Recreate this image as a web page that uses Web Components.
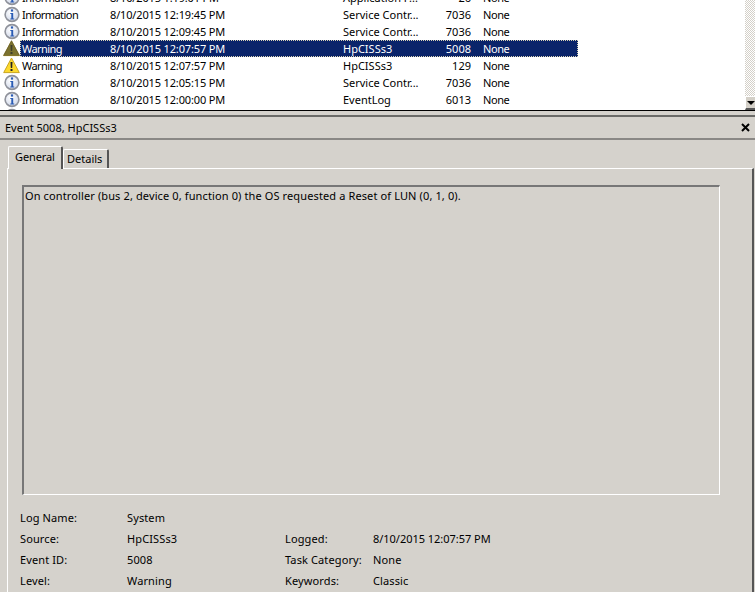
<!DOCTYPE html>
<html>
<head>
<meta charset="utf-8">
<title>Event 5008</title>
<style>
html, body { margin: 0; height: 100%; overflow: hidden; background: #d5d2cc; }
body { font: 11px/14px "Noto Sans", sans-serif; color: #000; }
</style>
</head>
<body>
<template id="info-icon">
  <svg width="17" height="17" viewBox="0 0 17 17">
    <defs><radialGradient id="b" cx="0.4" cy="0.35" r="0.8"><stop offset="0" stop-color="#fff"/><stop offset="1" stop-color="#c6cfe4"/></radialGradient></defs>
    <circle cx="9" cy="8.500" r="6.900" fill="url(#b)" stroke="#8f929b" stroke-width="1.600"/>
    <rect x="7.900" y="3.400" width="2.200" height="2.200" fill="#2a5bb4"/>
    <path d="M7.300 7h2.900v5.400h1v1H7.300v-1h1V8H7.300z" fill="#2a5bb4"/>
  </svg>
</template>
<template id="warn-icon">
  <svg width="17" height="17" viewBox="0 0 17 17">
    <path d="M8.500 1 16.300 15.600H.7z" fill="#fcd92e" stroke="#c9a520" stroke-width="1" stroke-linejoin="round"/>
    <path d="M7.500 5h2l-.3 6H7.800z" fill="#222"/>
    <rect x="7.500" y="12" width="2" height="2" fill="#222"/>
  </svg>
</template>
<script>
  class EventRow extends HTMLElement {
    constructor() {
      super();
      this.attachShadow({ mode: 'open' });
    }

    // attributes are not there yet in the constructor while the parser runs
    connectedCallback() {
      const selected = this.hasAttribute('selected');
      const type = this.getAttribute('level') === 'Warning' ? 'warn-icon' : 'info-icon';
      this.shadowRoot.innerHTML = `
<style>
:host { display: block; height: 17px; }
.row { display: flex; height: 17px; }
.icon { width: 17px; height: 17px; margin-left: 3px; flex: none; position: relative; }
.icon svg { display: block; }
.shade { position: absolute; inset: 0; background: #4a4a30; opacity: .72; clip-path: polygon(50% 0, 100% 92%, 0 92%); }
.cells { display: flex; width: 558px; height: 17px; align-items: center; box-sizing: border-box; white-space: nowrap; padding-top: 1px; }
.selected { background: #0a246a; color: #fff; outline: 1px dotted #d8d2b4; outline-offset: -1px; }
.level { width: 90px; padding-left: 2px; box-sizing: border-box; letter-spacing: -.55px; }
.date { width: 233px; letter-spacing: -.15px; }
.source { width: 84px; }
.id { width: 44px; text-align: right; }
.task { padding-left: 12px; letter-spacing: -.4px; }
</style>
<div class="row">
  <div class="icon"></div>
  <div class="cells ${selected ? 'selected' : ''}">
    <span class="level">${this.getAttribute('level') || ''}</span>
    <span class="date">${this.getAttribute('date') || ''}</span>
    <span class="source">${this.getAttribute('source') || ''}</span>
    <span class="id">${this.getAttribute('event') || ''}</span>
    <span class="task">${this.getAttribute('task') || ''}</span>
  </div>
</div>`;
      const $icon = this.shadowRoot.querySelector('.icon');
      $icon.appendChild(document.getElementById(type).content.cloneNode(true));
      if (selected) {
        $icon.insertAdjacentHTML('beforeend', '<div class="shade"></div>');
      }
    }
  }
  customElements.define('event-row', EventRow);

  class EventList extends HTMLElement {
    constructor() {
      super();
      const shadowRoot = this.attachShadow({ mode: 'open' });
      shadowRoot.innerHTML = `
<style>
:host { display: flex; height: 110px; background: #fff; border-bottom: 1px solid #000; overflow: hidden; }
.rows { flex: 1; margin-top: -11px; min-width: 0; }
.bar { width: 10px; display: flex; flex-direction: column; justify-content: flex-end;
  background: repeating-conic-gradient(#d4d0c8 0 25%, #fff 0 50%) 0 0 / 2px 2px; }
.btn { height: 14px; background: #d4d0c8; border-top: 1px solid #fff; border-left: 1px solid #fff; border-bottom: 2px solid #555; box-sizing: border-box; position: relative; }
.btn::after { content: ''; position: absolute; left: 1px; top: 4px; border: 4px solid transparent; border-top-color: #000; border-bottom: 0; }
</style>
<div class="rows"><slot></slot></div>
<div class="bar"><div class="btn"></div></div>`;
    }
  }
  customElements.define('event-list', EventList);

  class PaneHeader extends HTMLElement {
    constructor() {
      super();
      const shadowRoot = this.attachShadow({ mode: 'open' });
      shadowRoot.innerHTML = `
<style>
:host { display: flex; align-items: center; justify-content: space-between; height: 21px; margin-top: 4px;
  border-top: 2px solid #6b6b68; border-bottom: 2px solid #8a8885; padding: 0 5px; }
svg { display: block; }
</style>
<span><slot></slot></span>
<svg width="9" height="9" viewBox="0 0 9 9"><path d="M1 1l7 7M8 1 1 8" stroke="#000" stroke-width="2"/></svg>`;
    }
  }
  customElements.define('pane-header', PaneHeader);

  class TabStrip extends HTMLElement {
    constructor() {
      super();
      const shadowRoot = this.attachShadow({ mode: 'open' });
      shadowRoot.innerHTML = `
<style>
:host { display: flex; align-items: flex-end; height: 22px; margin: 6px 0 0 8px; }
.tab { box-sizing: border-box; border: 1px solid #fff; border-right: 2px solid #555; border-bottom: 0; border-radius: 2px 2px 0 0; }
.on { width: 55px; height: 23px; padding: 3px 0 0 6px; position: relative; top: 1px; z-index: 1; background: #d5d2cc; letter-spacing: -.1px; }
.off { width: 46px; height: 19px; padding: 2px 0 0 3px; }
</style>
<div class="tab on">General</div><div class="tab off">Details</div>`;
    }
  }
  customElements.define('tab-strip', TabStrip);

  class MessageBox extends HTMLElement {
    constructor() {
      super();
      const shadowRoot = this.attachShadow({ mode: 'open' });
      shadowRoot.innerHTML = `
<style>
:host { display: block; box-sizing: border-box; width: 698px; height: 310px; margin-left: 14px;
  border: 1px solid #fff; border-top: 2px solid #777; border-left: 2px solid #777; padding: 2px 1px;
  letter-spacing: .12px; }
</style>
<slot></slot>`;
    }
  }
  customElements.define('message-box', MessageBox);

  class TabPage extends HTMLElement {
    constructor() {
      super();
      const shadowRoot = this.attachShadow({ mode: 'open' });
      shadowRoot.innerHTML = `
<style>
:host { display: block; margin: 0 1px 0 7px; height: 424px; padding-top: 16px; box-sizing: border-box;
  border-top: 1px solid #fff; border-left: 1px solid #fff; border-right: 2px solid #555; }
</style>
<slot></slot>`;
    }
  }
  customElements.define('tab-page', TabPage);

  class EventFields extends HTMLElement {
    constructor() {
      super();
      const shadowRoot = this.attachShadow({ mode: 'open' });
      shadowRoot.innerHTML = `
<style>
:host { display: grid; grid-template-columns: 107px 158px 88px auto; grid-auto-rows: 21px; justify-content: start;
  margin: 12px 0 0 12px; align-items: center; letter-spacing: .12px; }
</style>
<slot></slot>`;
    }
  }
  customElements.define('event-fields', EventFields);
</script>

<event-list>
  <event-row level="Information" date="8/10/2015 1:19:01 PM" source="Application P..." event="26" task="None"></event-row>
  <event-row level="Information" date="8/10/2015 12:19:45 PM" source="Service Contr..." event="7036" task="None"></event-row>
  <event-row level="Information" date="8/10/2015 12:09:45 PM" source="Service Contr..." event="7036" task="None"></event-row>
  <event-row level="Warning" date="8/10/2015 12:07:57 PM" source="HpCISSs3" event="5008" task="None" selected></event-row>
  <event-row level="Warning" date="8/10/2015 12:07:57 PM" source="HpCISSs3" event="129" task="None"></event-row>
  <event-row level="Information" date="8/10/2015 12:05:15 PM" source="Service Contr..." event="7036" task="None"></event-row>
  <event-row level="Information" date="8/10/2015 12:00:00 PM" source="EventLog" event="6013" task="None"></event-row>
  <event-row></event-row>
</event-list>
<pane-header>Event 5008, HpCISSs3</pane-header>
<tab-strip></tab-strip>
<tab-page>
  <message-box>On controller (bus 2, device 0, function 0) the OS requested a Reset of LUN (0, 1, 0).</message-box>
  <event-fields>
    <span>Log Name:</span><span>System</span><span></span><span></span>
    <span>Source:</span><span>HpCISSs3</span><span>Logged:</span><span style="letter-spacing: -.03px">8/10/2015 12:07:57 PM</span>
    <span>Event ID:</span><span>5008</span><span>Task Category:</span><span>None</span>
    <span>Level:</span><span>Warning</span><span>Keywords:</span><span>Classic</span>
  </event-fields>
</tab-page>
</body>
</html>
